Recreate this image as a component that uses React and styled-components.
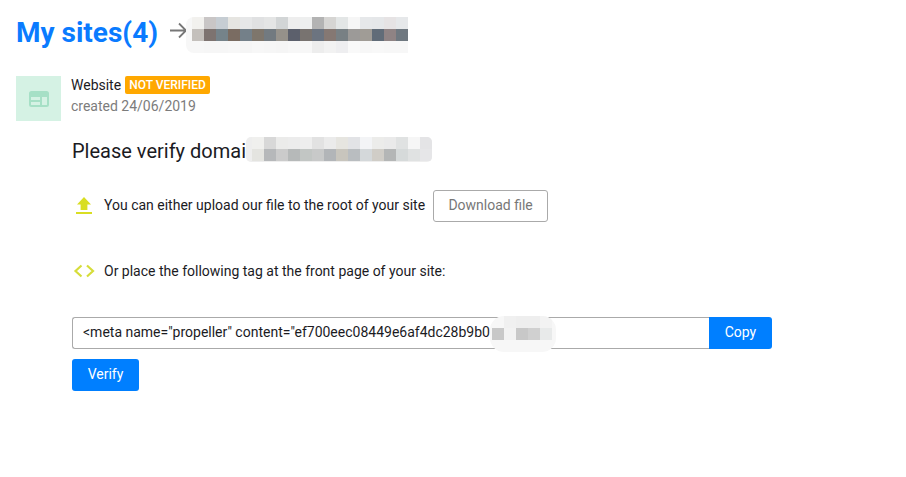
import styled, { createGlobalStyle } from "styled-components";

const GlobalStyle = createGlobalStyle`
  html, body {
    margin: 0;
    background: #fff;
  }
  body {
    font-family: Roboto, "Liberation Sans", sans-serif;
    color: #1b1b1f;
  }
`;

const Page = styled.div`
  width: 906px;
  height: 477px;
  overflow: hidden;
  padding: 17px 0 0 16px;
  box-sizing: border-box;
`;

const Header = styled.header`
  display: flex;
  align-items: flex-start;
  height: 36px;
`;

const Title = styled.h1`
  margin: 0;
  font-size: 28px;
  line-height: 32px;
  font-weight: 700;
  color: #0a7bff;
`;

const ArrowIcon = styled.svg`
  width: 20px;
  height: 20px;
  margin: 4px 0 0 11px;
  flex: none;
`;

const SiteRow = styled.section`
  display: flex;
  gap: 10px;
  margin-top: 23px;
`;

const SiteIcon = styled.div`
  width: 45px;
  height: 45px;
  background: #d5f2e4;
  display: flex;
  align-items: center;
  justify-content: center;
`;

const SiteInfo = styled.div`
  display: flex;
  flex-direction: column;
  gap: 2px;
`;

const SiteName = styled.div`
  display: flex;
  align-items: center;
  gap: 4px;
  font-size: 14px;
  height: 18px;
`;

const Badge = styled.span`
  background: #ffa800;
  color: #fff;
  font-size: 12px;
  font-weight: 500;
  line-height: 18px;
  padding: 0 4px;
  border-radius: 2px;
`;

const Created = styled.div`
  font-size: 14px;
  line-height: 20px;
  color: #7c7c7c;
`;

const Content = styled.main`
  margin-left: 56px;
  width: 700px;
`;

const Heading = styled.h2`
  display: flex;
  align-items: flex-start;
  margin: 16px 0 0;
  font-size: 20px;
  line-height: 29px;
  height: 25px;
  font-weight: 400;
`;

const Step = styled.div`
  display: flex;
  align-items: center;
  height: 32px;
  font-size: 14px;
  margin-top: ${(p) => p.$top}px;
`;

const StepIcon = styled.div`
  width: 32px;
  display: flex;
`;

const StepText = styled.span`
  padding-bottom: ${(p) => p.$lift || 0}px;
`;

const OutlineButton = styled.button`
  height: 32px;
  width: 115px;
  margin-left: 8px;
  background: #fff;
  border: 1px solid #aaa;
  border-radius: 3px;
  color: #777;
  font: 14px Roboto, sans-serif;
  padding: 0 0 2px;
`;

const TagField = styled.div`
  position: relative;
  display: flex;
  margin-top: 30px;
`;

const TagInput = styled.input`
  width: 637px;
  height: 32px;
  box-sizing: border-box;
  border: 1px solid #aaa;
  border-right: none;
  border-radius: 3px 0 0 3px;
  padding: 0 10px 2px;
  font: 14px Roboto, sans-serif;
  color: #1b1b1f;
  outline: none;
`;

const PrimaryButton = styled.button`
  display: block;
  height: ${(p) => p.$height}px;
  width: ${(p) => p.$width}px;
  background: #007fff;
  color: #fff;
  border: none;
  border-radius: ${(p) => p.$radius};
  font: 14px Roboto, sans-serif;
  padding: 0 0 2px;
`;

const VerifyRow = styled.div`
  margin-top: 10px;
`;

const MosaicSvg = styled.svg`
  display: block;
  flex: none;
  overflow: hidden;
  border-radius: ${(p) => p.$radius};
  margin-left: ${(p) => p.$left || 0}px;
`;

const TagMosaic = styled.div`
  position: absolute;
  left: 418px;
  top: -1px;
`;

// censored parts of the screenshot, one colour per 12px block
function Mosaic({ rows, width, height, radius, fill, lead = 0, left }) {
  return (
    <MosaicSvg $radius={radius} $left={left} width={width} height={height} shapeRendering="crispEdges">
      <rect width={width} height={height} fill={fill} />
      {rows.map((row, y) =>
        row.map((color, x) =>
          color ? (
            <rect key={`${x}-${y}`} x={lead + x * 12} y={y * 12} width="12" height="12" fill={color} />
          ) : null
        )
      )}
    </MosaicSvg>
  );
}

const domainMosaic = [
  ["#f2f1ee", "#c9c6c6", "#c6cdd3", "#e6e5e1", "#e6e7e8", "#e0e1e2", "#e4e5e5", "#d2d5d6", "#eeeeee", "#eeefef", "#b3b3b3", "#d6d5d3", "#e3e6e6", "#f6f6f6", "#e6e8ea", "#e5e7e9", "#e6e3e4", "#e6e8ea"],
  ["#c4c0bc", "#7d7370", "#75838a", "#7a6c62", "#748089", "#7e766c", "#727a80", "#95918a", "#5c606c", "#787370", "#6c7480", "#857873", "#788084", "#9c9a98", "#a09c96", "#616c78", "#8f8384", "#6f7880"],
  [null, "#f6f6f6", "#f6f6f6", "#f7f7f7", "#f5f5f5", "#f7f7f7", "#f6f6f6", "#f5f5f5", "#f7f7f7", "#f7f7f7", "#ededed", "#f2f2f2", "#eeeef0", "#f9f9f9", "#f7f7f7", "#f8f8f8", "#f7f7f7", "#f7f7f7"],
];

const headingMosaic = [
  ["#f0f0ee", "#d8d8d8", "#ebebea", "#ececec", "#eeeeee", "#e2e2e2", "#ebebeb", "#e6e5e0", "#e2e3e6", "#f3f4f6", "#ececea", "#eaeaea", "#e0e2e2", "#f6f6f6", "#e4e4e6"],
  ["#e4e4e0", "#b6b8ba", "#cbcbcb", "#b6b9b9", "#c2c6c4", "#c8c9c9", "#b2b5b8", "#c8c5bd", "#b9bdc0", "#d4d8da", "#d0cdc7", "#b4b6b6", "#d6dada", "#e0e2e2", "#e6e6e8"],
];

const tagMosaic = [
  [null, "#f0f0f0", "#eeeeee", "#eeeeee", "#f3f3f3"],
  ["#c8c8c8", "#f2f2f2", "#c8c8c8", "#d0d0d0", "#e8eaea"],
];

function App() {
  return (
    <>
      <GlobalStyle />
      <Page>
        <Header>
          <Title>My sites(4)</Title>
          <ArrowIcon viewBox="0 0 20 20" fill="none" stroke="#777" strokeWidth="1.8">
            <path d="M1 9.5h16M10 2.5l7 7-7 7" />
          </ArrowIcon>
          <Mosaic rows={domainMosaic} width={222} height={36} radius="8px 0 0 8px" fill="#f7f7f7" lead={6} left={-3} />
        </Header>

        <SiteRow>
          <SiteIcon>
            <svg width="20" height="16" viewBox="0 0 20 16" fill="none" stroke="#a6e0c6" strokeWidth="2">
              <rect x="1" y="1" width="18" height="14" rx="1.5" />
              <path d="M1 4h18" strokeWidth="4" />
              <path d="M1 10h10M12 5.5V15" />
            </svg>
          </SiteIcon>
          <SiteInfo>
            <SiteName>
              Website
              <Badge>NOT VERIFIED</Badge>
            </SiteName>
            <Created>created 24/06/2019</Created>
          </SiteInfo>
        </SiteRow>

        <Content>
          <Heading>
            Please verify domai
            <Mosaic rows={headingMosaic} width={186} height={25} radius="5px" fill="#eeeeee" lead={6} />
          </Heading>

          <Step $top={28}>
            <StepIcon>
              <svg width="24" height="20" viewBox="0 0 24 20" fill="#d9de23">
                <path d="M12 1l7 7.5h-3.6V14H8.6V8.5H5z" />
                <rect x="4" y="16" width="16" height="2" />
              </svg>
            </StepIcon>
            <StepText $lift={2}>You can either upload our file to the root of your site</StepText>
            <OutlineButton>Download file</OutlineButton>
          </Step>

          <Step $top={33}>
            <StepIcon>
              <svg width="24" height="16" viewBox="0 0 24 16" fill="none" stroke="#d6dd3a" strokeWidth="2.2">
                <path d="M9.5 2.5L3.5 8l6 5.5M15 2.5L21 8l-6 5.5" />
              </svg>
            </StepIcon>
            <StepText>Or place the following tag at the front page of your site:</StepText>
          </Step>

          <TagField>
            <TagInput readOnly value={'<meta name="propeller" content="ef700eec08449e6af4dc28b9b0'} />
            <PrimaryButton $width={63} $height={32} $radius="0 3px 3px 0">Copy</PrimaryButton>
            <TagMosaic>
              <Mosaic rows={tagMosaic} width={66} height={36} radius="14px" fill="#f7f7f7" lead={2} />
            </TagMosaic>
          </TagField>

          <VerifyRow>
            <PrimaryButton $width={67} $height={32} $radius="3px">Verify</PrimaryButton>
          </VerifyRow>
        </Content>
      </Page>
    </>
  );
}

export default App;
